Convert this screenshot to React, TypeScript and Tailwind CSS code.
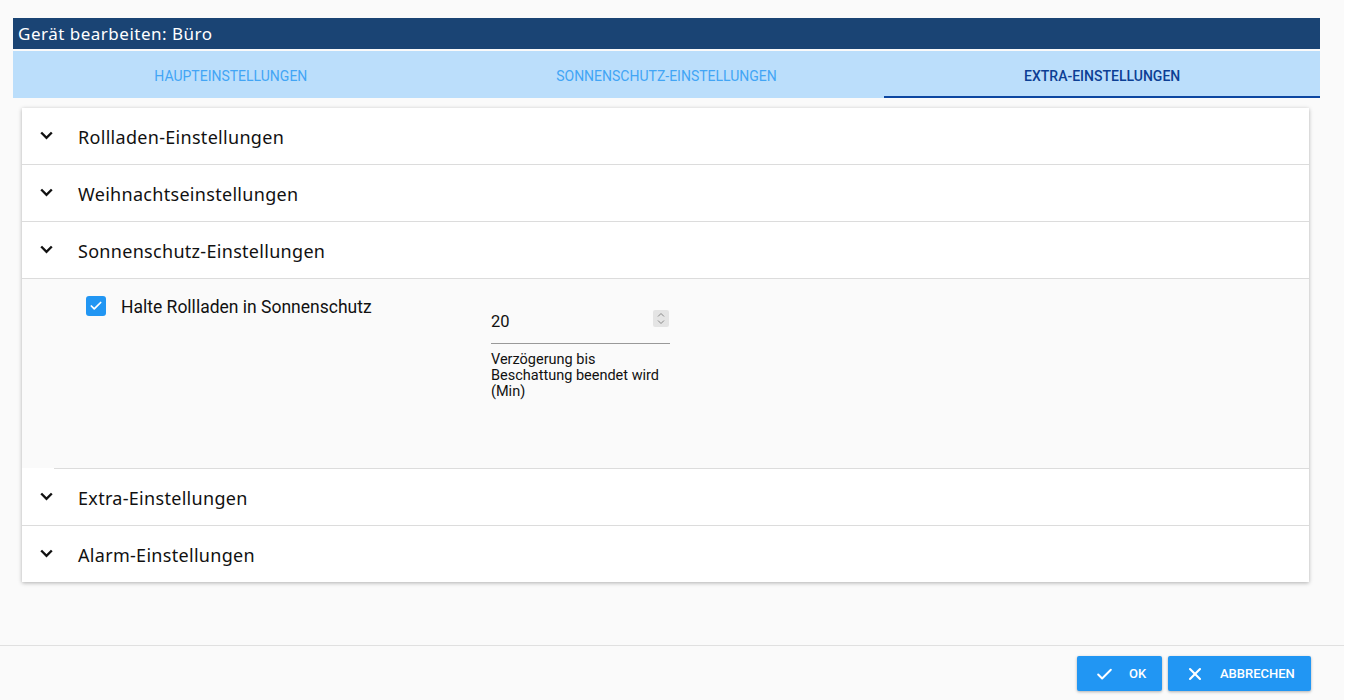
import { Check, X } from 'lucide-react';

const sections = [
  'Rollladen-Einstellungen',
  'Weihnachtseinstellungen',
  'Sonnenschutz-Einstellungen',
  'Extra-Einstellungen',
  'Alarm-Einstellungen',
];

const tabs = ['Haupteinstellungen', 'Sonnenschutz-Einstellungen', 'Extra-Einstellungen'];

function Chevron() {
  return (
    <svg width="13" height="9" viewBox="0 0 13 9" className="shrink-0">
      <path d="M1.2 1.5 6.5 6.8l5.3-5.3" fill="none" stroke="#111" strokeWidth="2.4" />
    </svg>
  );
}

function SectionHeader({ title }: { title: string }) {
  return (
    <div className="flex h-[56px] items-center pl-[18px] pt-[2px]">
      <div className="-mt-[4px]">
        <Chevron />
      </div>
      <span className="ml-[25px] text-[18px] text-[#111] tracking-[0.3px]">{title}</span>
    </div>
  );
}

export default function App() {
  return (
    <div
      className="min-h-[700px] w-[1344px] bg-[#fafafa] flex flex-col"
      style={{ fontFamily: '"Noto Sans", "Open Sans", sans-serif' }}
    >
      <div className="pt-[18px] pl-[13px] w-[1320px]">
        <div className="h-[31px] bg-[#1a4474] flex items-center pl-[5px] text-[17px] tracking-[0.5px] text-white">
          Gerät bearbeiten: Büro
        </div>
        <div className="mt-[2px] h-[47px] bg-[#bbdefb] grid grid-cols-3">
          {tabs.map((t, i) => (
            <div
              key={t}
              className={
                i === 2
                  ? 'flex items-center justify-center uppercase text-[14px] text-[#0d3f94] font-medium border-b-2 border-[#0d47a1] pt-[5px]'
                  : 'flex items-center justify-center uppercase text-[14px] text-[#42a5f5] pt-[3px]'
              }
              style={{ fontFamily: 'Roboto, sans-serif' }}
            >
              {t}
            </div>
          ))}
        </div>
      </div>

      <div className="ml-[22px] mt-[10px] w-[1287px] bg-white shadow-[0_1px_4px_rgba(0,0,0,0.3)]">
        <SectionHeader title={sections[0]} />
        <div className="border-t border-[#dcdcdc]" />
        <SectionHeader title={sections[1]} />
        <div className="border-t border-[#dcdcdc]" />
        <SectionHeader title={sections[2]} />
        <div className="border-t border-[#dcdcdc]" />
        <div className="h-[189px] bg-[#fafafa] flex pt-[17px]" style={{ fontFamily: 'Roboto, sans-serif' }}>
          <div className="ml-[64px] w-[405px] flex items-start">
            <div className="w-[20px] h-[20px] rounded-[3px] bg-[#2196f3] flex items-center justify-center">
              <Check size={14} color="white" strokeWidth={3} />
            </div>
            <span className="ml-[15px] text-[17.5px] text-[#111] leading-[22px]">
              Halte Rollladen in Sonnenschutz
            </span>
          </div>
          <div className="w-[179px] pt-[14px]">
            <div className="flex items-center justify-between border-b border-[#999] h-[34px] pb-[4px]">
              <span className="text-[16.5px] text-[#111] -mt-[4px]">20</span>
              <div className="w-[16px] h-[17px] bg-[#e4e4e4] rounded-[2px] flex flex-col items-center justify-center -mt-[12px] mr-[1px]">
                <svg width="8" height="13" viewBox="0 0 8 13">
                  <path d="M1 4.5 4 1.5l3 3M1 8.5l3 3 3-3" fill="none" stroke="#888" strokeWidth="1" />
                </svg>
              </div>
            </div>
            <div className="mt-[8px] text-[14.5px] leading-[16px] text-[#111]">
              Verzögerung bis Beschattung beendet wird (Min)
            </div>
          </div>
        </div>
        <div className="border-t border-[#dcdcdc] ml-[32px]" />
        <SectionHeader title={sections[3]} />
        <div className="border-t border-[#dcdcdc]" />
        <SectionHeader title={sections[4]} />
      </div>

      <div className="mt-[63px] border-t border-[#e0e0e0] flex justify-end gap-[6px] pr-[33px] pt-[10px] pb-[8px]">
        <button className="h-[35px] w-[85px] bg-[#2196f3] rounded-[2px] shadow-[0_1px_3px_rgba(0,0,0,0.3)] flex items-center pl-[18px] pt-[1px] text-white text-[13px] uppercase" style={{ fontFamily: 'Roboto, sans-serif' }}>
          <Check size={19} strokeWidth={2.5} />
          <span className="ml-[15px] font-medium">OK</span>
        </button>
        <button className="h-[35px] w-[143px] bg-[#2196f3] rounded-[2px] shadow-[0_1px_3px_rgba(0,0,0,0.3)] flex items-center pl-[17px] pt-[1px] text-white text-[13px] uppercase" style={{ fontFamily: 'Roboto, sans-serif' }}>
          <X size={20} strokeWidth={2.5} />
          <span className="ml-[15px] font-medium">Abbrechen</span>
        </button>
      </div>
    </div>
  );
}
